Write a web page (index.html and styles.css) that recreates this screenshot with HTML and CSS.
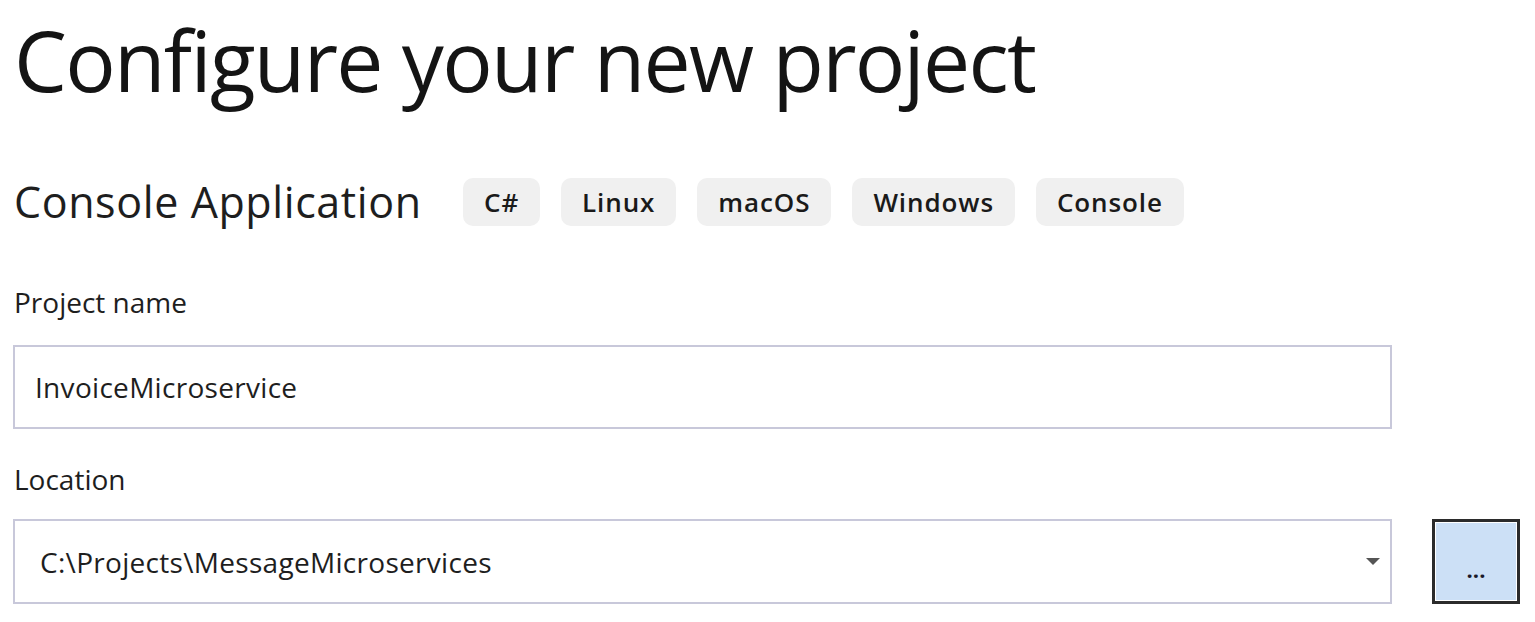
FILE: index.html
```html
<!DOCTYPE html>
<html lang="en">
<head>
<meta charset="utf-8">
<title>Configure your new project</title>
<link rel="stylesheet" href="styles.css">
</head>
<body>
<main class="page">
  <h1 class="title">Configure your new project</h1>
  <div class="template-row">
    <h2 class="template-name">Console Application</h2>
    <ul class="tags">
      <li class="tag">C#</li>
      <li class="tag">Linux</li>
      <li class="tag">macOS</li>
      <li class="tag">Windows</li>
      <li class="tag">Console</li>
    </ul>
  </div>
  <div class="field">
    <label class="field-label">Project name</label>
    <div class="input input-name">InvoiceMicroservice</div>
  </div>
  <div class="field field-location">
    <label class="field-label">Location</label>
    <div class="location-row">
      <div class="input input-location">
        <span class="input-text">C:\Projects\MessageMicroservices</span>
        <svg class="caret" width="14" height="8" viewBox="0 0 14 8"><path d="M0 0 H14 L7 7 Z" fill="#555"/></svg>
      </div>
      <button class="browse" type="button">...</button>
    </div>
  </div>
</main>
</body>
</html>
```
FILE: styles.css
```css
html, body {
  margin: 0;
  padding: 0;
  background: #ffffff;
}
body {
  font-family: "Open Sans", "Noto Sans", sans-serif;
  color: #1b1b1b;
}
.page {
  padding: 0 0 0 13px;
  width: 1507px;
}
.title {
  margin: 0;
  font-weight: 400;
  font-size: 84px;
  line-height: 120px;
  letter-spacing: -1.7px;
  color: #141414;
  padding-left: 1px;
}
.template-row {
  display: flex;
  align-items: center;
  margin-top: 58px;
  height: 48px;
}
.template-name {
  margin: 0;
  font-weight: 400;
  font-size: 43px;
  letter-spacing: 0.6px;
  line-height: 48px;
  color: #1e1e1e;
  padding-left: 1px;
  width: 409px;
  white-space: nowrap;
}
.tags {
  list-style: none;
  display: flex;
  gap: 21px;
  margin: 0 0 0 40px;
  padding: 0;
}
.tag {
  height: 48px;
  line-height: 48px;
  padding: 0 21px;
  border-radius: 10px;
  background: #f0f0f0;
  font-size: 26px;
  font-weight: 600;
  letter-spacing: 0.9px;
  color: #1a1a1a;
}
.field {
  display: flex;
  flex-direction: column;
}
.field-label {
  font-size: 28px;
  line-height: 36px;
  letter-spacing: 0;
  color: #1e1e1e;
  margin-top: 58px;
  padding-left: 1px;
}
.field-location .field-label {
  margin-top: 32px;
}
.input {
  box-sizing: border-box;
  width: 1379px;
  height: 84px;
  border: 2px solid #c8c8da;
  background: #fff;
  display: flex;
  align-items: center;
  font-size: 28px;
  letter-spacing: 0.3px;
  color: #1e1e1e;
  margin-top: 25px;
}
.input-name {
  padding-left: 20px;
}
.location-row {
  display: flex;
  align-items: flex-start;
  margin-top: 22px;
}
.input-location {
  margin-top: 0;
  height: 85px;
  padding-left: 25px;
  padding-right: 10px;
  justify-content: space-between;
}
.caret {
  display: block;
}
.browse {
  box-sizing: border-box;
  margin-left: 40px;
  width: 88px;
  height: 85px;
  border: 3px solid #2b2b2b;
  box-shadow: inset 0 0 0 1px #ffffff;
  background: #cce0f6;
  font-family: "Open Sans", sans-serif;
  font-size: 22px;
  font-weight: 700;
  color: #1a1a2a;
  padding: 14px 0 0 0;
  letter-spacing: 0;
}
```
